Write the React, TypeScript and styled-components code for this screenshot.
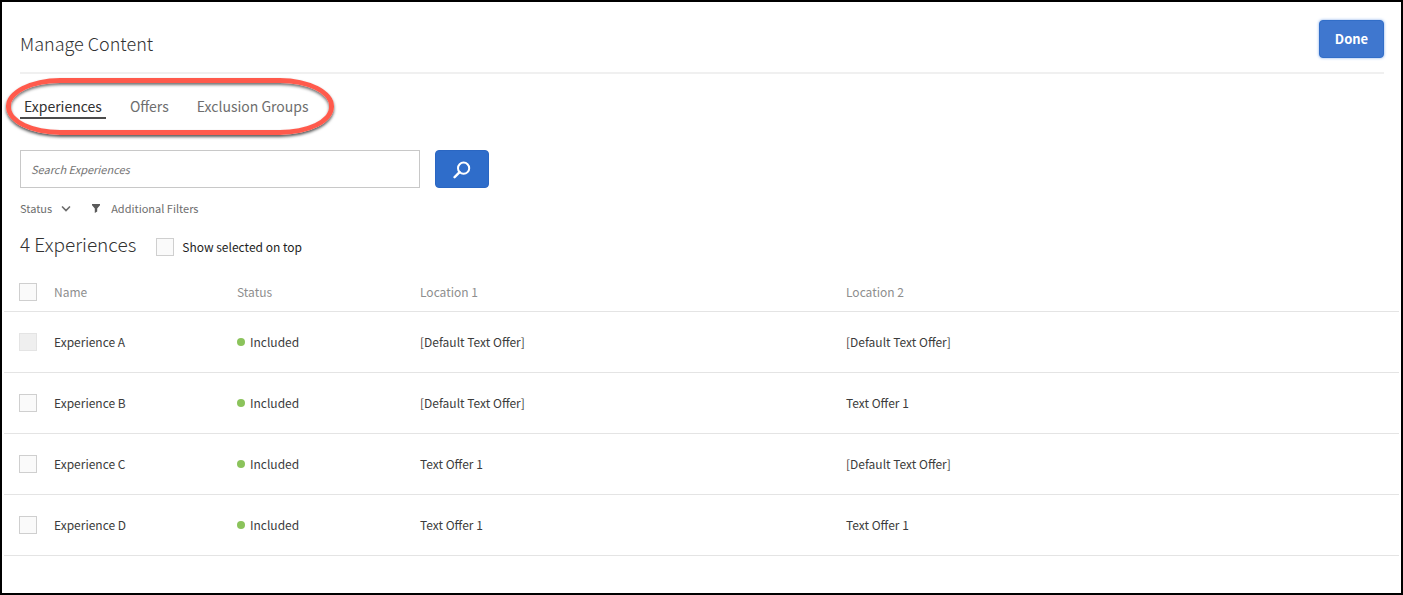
import React from "react";
import styled, { createGlobalStyle } from "styled-components";

const GlobalStyle = createGlobalStyle`
  *, *::before, *::after { box-sizing: border-box; }
  body { margin: 0; background: #fff; }
  body, button, input {
    font-family: "Noto Sans CJK SC", "Liberation Sans", sans-serif;
    font-size: 12px;
    line-height: 20px;
  }
`;

const Page = styled.main`
  min-height: 100vh;
  border: 2px solid #000;
  background: #fff;
  color: #3c3c3c;
`;

const Header = styled.header`
  display: flex;
  justify-content: space-between;
  align-items: flex-start;
  height: 72px;
  margin: 0 17px 0 18px;
  padding-top: 18px;
  border-bottom: 2px solid #f0f0f0;
`;

const Title = styled.h1`
  margin: 0;
  padding-top: 8px;
  font-size: 18px;
  line-height: 30px;
  font-weight: 300;
  color: #323232;
`;

const DoneButton = styled.button`
  width: 65px;
  height: 38px;
  padding: 0;
  border: 1px solid #326ec8;
  border-radius: 4px;
  background: #3f77cf;
  box-shadow: 0 0 3px #7fa8e8;
  color: #fff;
  font-size: 13px;
  font-weight: 700;
`;

const TabBar = styled.nav`
  position: relative;
  display: flex;
  gap: 20px;
  width: max-content;
  margin: 21px 18px 0;
`;

const Tab = styled.a<{ $active?: boolean }>`
  padding: 0 4px;
  border-bottom: 2px solid ${(p) => (p.$active ? "#4b4b4b" : "transparent")};
  color: ${(p) => (p.$active ? "#323232" : "#6e6e6e")};
  font-size: 14px;
  line-height: 22px;
  text-decoration: none;
`;

const Highlight = styled.span`
  position: absolute;
  inset: -17px -21px -16px -14px;
  border: 5px solid #ff5a4c;
  border-radius: 54px / 28px;
  box-shadow: 0 2px 3px rgba(0, 0, 0, 0.65), inset 0 2px 3px rgba(0, 0, 0, 0.55);
  pointer-events: none;
`;

const SearchForm = styled.form`
  display: flex;
  gap: 15px;
  margin: 31px 18px 0;
`;

const SearchInput = styled.input`
  width: 400px;
  height: 38px;
  padding: 0 10px;
  border: 1px solid #c8c8c8;
  border-radius: 0;
  background: #fff;
  font-size: 11px;
  &::placeholder {
    color: #757575;
    font-style: italic;
    opacity: 1;
  }
`;

const SearchButton = styled.button`
  display: flex;
  align-items: center;
  justify-content: center;
  width: 54px;
  height: 38px;
  padding: 0;
  border: 1px solid #2a66c2;
  border-radius: 4px;
  background: #2f6dca;
  color: #fff;
`;

const Filters = styled.div`
  display: flex;
  gap: 21px;
  margin: 10px 18px 0;
`;

const FilterButton = styled.button<{ $gap: number }>`
  display: flex;
  align-items: center;
  gap: ${(p) => p.$gap}px;
  padding: 0;
  border: 0;
  background: none;
  color: #6e6e6e;
  font-size: 11px;
`;

const Summary = styled.div`
  display: flex;
  align-items: center;
  gap: 20px;
  margin: 11px 18px 0;
`;

const Count = styled.h2`
  margin: 0;
  font-size: 19px;
  line-height: 30px;
  font-weight: 300;
  color: #323232;
`;

const CheckLabel = styled.label`
  display: flex;
  align-items: center;
  gap: 8px;
  padding-top: 6px;
  color: #1e1e1e;
`;

const Checkbox = styled.input`
  appearance: none;
  display: block;
  flex: none;
  width: 18px;
  height: 18px;
  margin: 0;
  border: 1px solid #cfcfcf;
  background: #fafafa;
  &:disabled {
    border-color: #e4e4e4;
    background: #efefef;
  }
`;

const TableWrap = styled.div`
  margin: 15px 2px 0;
`;

const Table = styled.table`
  width: 100%;
  table-layout: fixed;
  border-collapse: separate;
  border-spacing: 0;
`;

const HeadCell = styled.th<{ $width?: string }>`
  width: ${(p) => p.$width ?? "auto"};
  height: 38px;
  padding: 0 0 2px;
  border-bottom: 1px solid #e4e4e4;
  color: #8e8e8e;
  font-weight: 400;
  text-align: left;
`;

const Cell = styled.td`
  height: 61px;
  padding: 0;
  border-bottom: 1px solid #e4e4e4;
`;

const CheckSlot = styled.div`
  padding-left: 15px;
`;

const Status = styled.span`
  display: flex;
  align-items: center;
  gap: 5px;
  &::before {
    content: "";
    width: 8px;
    height: 8px;
    border-radius: 50%;
    background: #8bc35b;
  }
`;

const fallback = "[Default Text Offer]";
const rows = [
  { name: "Experience A", first: fallback, second: fallback, locked: true },
  { name: "Experience B", first: fallback, second: "Text Offer 1" },
  { name: "Experience C", first: "Text Offer 1", second: fallback },
  { name: "Experience D", first: "Text Offer 1", second: "Text Offer 1" },
];

export default function App() {
  return (
    <>
      <GlobalStyle />
      <Page>
        <Header>
          <Title>Manage Content</Title>
          <DoneButton type="button">Done</DoneButton>
        </Header>
        <TabBar>
          <Tab href="#experiences" $active aria-current="page">Experiences</Tab>
          <Tab href="#offers">Offers</Tab>
          <Tab href="#exclusion-groups">Exclusion Groups</Tab>
          <Highlight />
        </TabBar>
        <SearchForm onSubmit={(e) => e.preventDefault()}>
          <SearchInput type="text" placeholder="Search Experiences" aria-label="Search Experiences" />
          <SearchButton type="submit" aria-label="Search">
            <svg width="18" height="20" viewBox="0 0 18 20" fill="none" stroke="currentColor" strokeWidth="2">
              <circle cx="10.6" cy="9.2" r="5.6" />
              <path d="M6.6 13.2 1.6 18.2" strokeWidth="2.4" strokeLinecap="round" />
            </svg>
          </SearchButton>
        </SearchForm>
        <Filters>
          <FilterButton type="button" $gap={9}>
            Status
            <svg width="10" height="8" viewBox="0 0 10 8" fill="none" stroke="currentColor" strokeWidth="1.7">
              <path d="m1.5 3 3.5 3.5L8.500 3" strokeLinecap="round" />
            </svg>
          </FilterButton>
          <FilterButton type="button" $gap={11}>
            <svg width="8" height="9" viewBox="0 0 8 9" fill="#5a5a5a">
              <path d="M0 0h8v1.3L5.2 4.5v3L2.8 9V4.5L0 1.3Z" />
            </svg>
            Additional Filters
          </FilterButton>
        </Filters>
        <Summary>
          <Count>4 Experiences</Count>
          <CheckLabel>
            <Checkbox type="checkbox" />
            Show selected on top
          </CheckLabel>
        </Summary>
        <TableWrap>
          <Table>
            <thead>
              <tr>
                <HeadCell $width="50px">
                  <CheckSlot><Checkbox type="checkbox" aria-label="Select all" /></CheckSlot>
                </HeadCell>
                <HeadCell $width="183px">Name</HeadCell>
                <HeadCell $width="183px">Status</HeadCell>
                <HeadCell $width="426px">Location 1</HeadCell>
                <HeadCell>Location 2</HeadCell>
              </tr>
            </thead>
            <tbody>
              {rows.map((row) => (
                <tr key={row.name}>
                  <Cell>
                    <CheckSlot>
                      <Checkbox type="checkbox" disabled={row.locked} aria-label={`Select ${row.name}`} />
                    </CheckSlot>
                  </Cell>
                  <Cell>{row.name}</Cell>
                  <Cell><Status>Included</Status></Cell>
                  <Cell>{row.first}</Cell>
                  <Cell>{row.second}</Cell>
                </tr>
              ))}
            </tbody>
          </Table>
        </TableWrap>
      </Page>
    </>
  );
}
